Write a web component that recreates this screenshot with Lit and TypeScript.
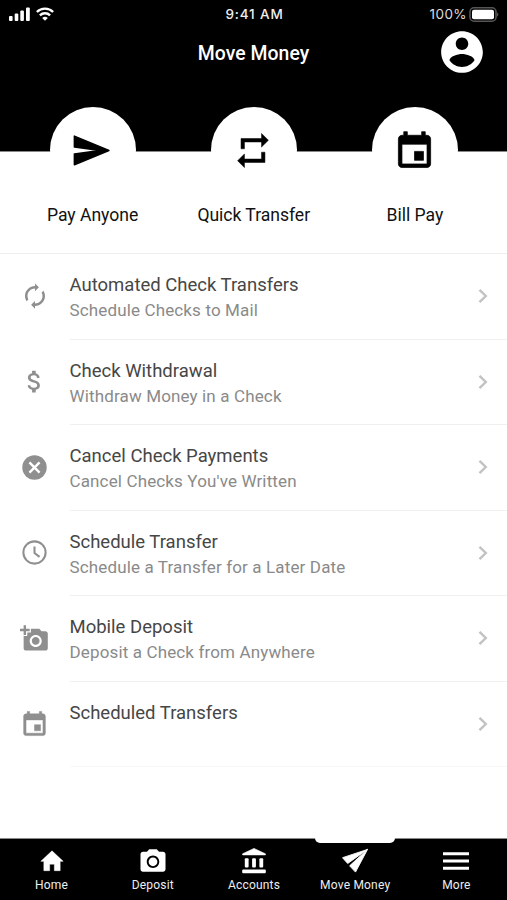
import { LitElement, html, css, svg } from "lit";
import { customElement } from "lit/decorators.js";

const EVENT = svg`<path d="M17 12h-5v5h5v-5zM16 1v2H8V1H6v2H5c-1.11 0-1.99.9-1.99 2L3 19c0 1.1.89 2 2 2h14c1.1 0 2-.9 2-2V5c0-1.1-.9-2-2-2h-1V1h-2zm3 18H5V8h14v11z" stroke-width=".4" stroke="currentColor" stroke-linejoin="round"/>`;

const icon = (shape: unknown, size: number, box = "0 0 24 24") =>
  html`<svg width=${size} height=${size} viewBox=${box} fill="currentColor">${shape}</svg>`;

const SEND = svg`<path d="M2.4 20.4L22.6 12 2.4 3.6V10l15 2-15 2z" stroke="currentColor" stroke-width=".9" stroke-linejoin="round"/>`;
const REPEAT = svg`<path d="M7 7h10v3l4-4-4-4v3H5v6h2V7zm10 10H7v-3l-4 4 4 4v-3h12v-6h-2v4z" stroke="currentColor" stroke-width=".3" stroke-linejoin="round"/>`;
const PERSON = svg`<path d="M12 2C6.48 2 2 6.48 2 12s4.48 10 10 10 10-4.48 10-10S17.52 2 12 2zm0 3c1.66 0 3 1.34 3 3s-1.34 3-3 3-3-1.34-3-3 1.34-3 3-3zm0 14.2c-2.5 0-4.71-1.28-6-3.22.03-1.99 4-3.08 6-3.08 1.99 0 5.97 1.09 6 3.08-1.29 1.94-3.5 3.22-6 3.22z"/>`;
const RENEW = svg`<path d="M12 6v2.1l3.1-3.1L12 1.9V4c-4.42 0-8 3.58-8 8 0 1.57.46 3.03 1.24 4.26L6.7 14.8c-.45-.83-.7-1.79-.7-2.8 0-3.31 2.69-6 6-6zm6.76 1.74L17.3 9.2c.44.84.7 1.79.7 2.8 0 3.31-2.69 6-6 6v-2.1L8.9 19l3.1 3.1V20c4.42 0 8-3.58 8-8 0-1.57-.46-3.03-1.24-4.26z"/>`;
const DOLLAR = svg`<path d="M11.8 10.9c-2.27-.59-3-1.2-3-2.15 0-1.09 1.01-1.85 2.7-1.85 1.78 0 2.44.85 2.5 2.1h2.21c-.07-1.72-1.12-3.3-3.21-3.81V3h-3v2.16c-1.94.42-3.5 1.68-3.5 3.61 0 2.31 1.91 3.46 4.7 4.13 2.5.6 3 1.48 3 2.41 0 .69-.49 1.79-2.7 1.79-2.06 0-2.87-.92-2.98-2.1h-2.2c.12 2.19 1.76 3.42 3.68 3.83V21h3v-2.15c1.95-.37 3.5-1.5 3.5-3.55 0-2.84-2.43-3.81-4.7-4.4z"/>`;
const CANCEL = svg`<circle cx="12" cy="12" r="10.1"/><path d="M7.8 7.8l8.4 8.4M16.2 7.8l-8.4 8.4" stroke="#fff" stroke-width="2"/>`;
const CLOCK = svg`<path d="M12 2.8a9.2 9.2 0 1 0 0 18.4 9.2 9.2 0 1 0 0-18.4zM12 7v5.4l4.2 3.2" fill="none" stroke="currentColor" stroke-width="1.7"/>`;
const ADD_PHOTO = svg`<path d="M3 4V1h2v3h3v2H5v3H3V6H0V4h3zm3 6V7h3V4h7l1.83 2H21c1.1 0 2 .9 2 2v12c0 1.1-.9 2-2 2H5c-1.1 0-2-.9-2-2V10h3zm7 9c2.76 0 5-2.24 5-5s-2.24-5-5-5-5 2.24-5 5 2.24 5 5 5zm-3.2-5c0 1.77 1.43 3.2 3.2 3.2s3.2-1.43 3.2-3.2-1.43-3.2-3.2-3.2-3.2 1.43-3.2 3.2z"/>`;
const HOME = svg`<path d="M10 20v-5.6h4V20h5v-8h2.6L12 3 2.4 12H5v8z" stroke="currentColor" stroke-width=".4" stroke-linejoin="round"/>`;
const CAMERA = svg`<circle cx="12" cy="12" r="3.5"/><path d="M9 2L7.17 4H4c-1.1 0-2 .9-2 2v12c0 1.1.9 2 2 2h16c1.1 0 2-.9 2-2V6c0-1.1-.9-2-2-2h-3.17L15 2H9zm3 15c-2.76 0-5-2.24-5-5s2.24-5 5-5 5 2.24 5 5-2.24 5-5 5z"/>`;
const BANK = svg`<path d="M12 .4L.6 5.8v1.1h22.8V5.8z" stroke="currentColor" stroke-width=".6" stroke-linejoin="round"/><rect x="2.8" y="10.2" width="3.8" height="9.2" rx="1"/><rect x="10.1" y="10.2" width="3.8" height="9.2" rx="1"/><rect x="17.4" y="10.2" width="3.8" height="9.2" rx="1"/><rect x=".2" y="21.6" width="23.6" height="3.6" rx="1"/>`;
const PLANE = svg`<path d="M25.5 .4L.5 8.7l5.2 5.8zM25.5 .4L7.6 16.8l5.9 6.3z" stroke="currentColor" stroke-width=".9" stroke-linejoin="round"/>`;
const MENU = svg`<path d="M0 1.8h26M0 9h26M0 16.2h26" stroke="currentColor" stroke-width="3" fill="none"/>`;

const ACTIONS = [
  { label: "Pay Anyone", art: icon(SEND, 41, "1 0 24 24") },
  { label: "Quick Transfer", art: icon(REPEAT, 41, "0.3 0 24 24") },
  { label: "Bill Pay", art: icon(EVENT, 43, "0 -0.5 24 24") },
];

const ROWS = [
  { title: "Automated Check Transfers", note: "Schedule Checks to Mail", art: icon(RENEW, 30) },
  { title: "Check Withdrawal", note: "Withdraw Money in a Check", art: icon(DOLLAR, 29) },
  { title: "Cancel Check Payments", note: "Cancel Checks You've Written", art: icon(CANCEL, 29) },
  { title: "Schedule Transfer", note: "Schedule a Transfer for a Later Date", art: icon(CLOCK, 29) },
  { title: "Mobile Deposit", note: "Deposit a Check from Anywhere", art: icon(ADD_PHOTO, 29) },
  { title: "Scheduled Transfers", note: "", art: icon(EVENT, 29, "0 -1 24 24") },
];

const TABS = [
  { label: "Home", art: icon(HOME, 28, "0 -0.3 24 24") },
  { label: "Deposit", art: icon(CAMERA, 30, "0 -0.6 24 24") },
  { label: "Accounts", art: icon(BANK, 26, "-1 0 26 26") },
  { label: "Move Money", art: icon(PLANE, 26, "0 -1 26 26"), active: true },
  { label: "More", art: icon(MENU, 26, "0 -4 26 26") },
];

@customElement("app-root")
export class AppRoot extends LitElement {
  static styles = css`
    :host {
      display: flex;
      flex-direction: column;
      height: 900px;
      background: #fff;
      font-family: Roboto, "Liberation Sans", sans-serif;
      overflow: hidden;
    }
    svg { display: block; flex: none; }
    .header {
      height: 151px;
      background: #000;
      border-bottom: 1px solid #888;
      color: #fff;
      flex: none;
    }
    .status, .bar {
      display: grid;
      grid-template-columns: 1fr auto 1fr;
      align-items: center;
    }
    .status {
      height: 27px;
      padding: 0 7px 0 9px;
      font: 500 13.5px/28px Inter, sans-serif;
      letter-spacing: 0.85px;
      color: #eee;
    }
    .signal { display: flex; gap: 5px; align-items: center; }
    .power {
      display: flex;
      justify-content: flex-end;
      align-items: center;
      gap: 2px;
      font-weight: 400;
      letter-spacing: 0.4px;
      color: #ddd;
    }
    .bar { height: 50px; }
    .title {
      grid-column: 2;
      font-size: 19.4px;
      font-weight: 500;
      letter-spacing: 0.05px;
      line-height: 46px;
      padding-top: 4px;
    }
    .profile { justify-self: end; margin-right: 20px; }
    .actions {
      display: grid;
      grid-template-columns: repeat(3, 1fr);
      margin-top: -45px;
      padding: 0 11.5px 0 12px;
      height: 146px;
      flex: none;
      border-bottom: 1px solid #ededed;
    }
    .action {
      display: flex;
      flex-direction: column;
      align-items: center;
      font-size: 17.6px;
      line-height: 22px;
      letter-spacing: -0.04px;
      color: #111;
    }
    .disc {
      display: grid;
      place-items: center;
      width: 86px;
      height: 86px;
      border-radius: 50%;
      background: #fff;
      color: #000;
      margin-bottom: 11px;
    }
    .row {
      display: grid;
      grid-template-columns: 69.5px 1fr;
      height: 85.5px;
      flex: none;
    }
    .row:last-of-type .body { border-color: #f8f8f8; }
    .glyph {
      display: grid;
      place-items: center;
      padding-bottom: 1px;
      color: #8f8f8f;
    }
    .body {
      display: flex;
      justify-content: space-between;
      align-items: center;
      border-bottom: 1px solid #f0f0f0;
      padding-right: 19px;
    }
    .copy { height: 50px; }
    .name {
      font-size: 18.5px;
      line-height: 26px;
      padding-top: 1px;
      margin-bottom: -1px;
      color: #464646;
    }
    .note {
      font-size: 17px;
      line-height: 26px;
      letter-spacing: 0.14px;
      color: #8a8a8a;
    }
    .tabs {
      display: grid;
      grid-template-columns: repeat(5, 1fr);
      margin-top: auto;
      padding-left: 1px;
      height: 61px;
      background: #000;
      border-top: 1px solid #888;
      color: #fff;
      flex: none;
    }
    .tab {
      position: relative;
      display: flex;
      flex-direction: column;
      align-items: center;
      font-size: 12px;
      line-height: 16px;
      letter-spacing: 0.2px;
      color: #eee;
    }
    .pic { display: grid; place-items: center; height: 38px; margin-top: 3px; margin-bottom: -3px; color: #fff; }
    .active::before {
      content: "";
      position: absolute;
      top: -1px;
      width: 80px;
      height: 5px;
      border-radius: 0 0 5px 5px;
      background: #fff;
    }
  `;

  render() {
    return html`
      <header class="header">
        <div class="status">
          <div class="signal">
            <svg width="22" height="14" viewBox="0 0 22 14" fill="#fff">
              <rect x="0" y="9" width="3.6" height="5" rx="1" /><rect x="5.7" y="6.5" width="3.6" height="7.5" rx="1" />
              <rect x="11.3" y="3.5" width="3.6" height="10.5" rx="1" /><rect x="17" y="0.5" width="3.8" height="13.5" rx="1" />
            </svg>
            <svg width="18" height="14" viewBox="0 0 18 14" fill="none" stroke="#fff" stroke-width="2.4">
              <path d="M.9 5a11.5 11.5 0 0 1 16.2 0M3.9 8.4a7.2 7.2 0 0 1 10.2 0" />
              <path d="M9 13.8L6.2 11a4 4 0 0 1 5.6 0z" fill="#fff" stroke="none" />
            </svg>
          </div>
          <div>9:41 AM</div>
          <div class="power">
            <span>100%</span>
            <svg width="31" height="15" viewBox="0 0 31 15">
              <rect x="1" y="0.8" width="26" height="13.4" rx="4" fill="none" stroke="#555" stroke-width="1.6" />
              <rect x="3" y="2.8" width="22" height="9.4" rx="2" fill="#fff" />
              <path d="M28.3 5.2q2 2.3 0 4.6z" fill="#777" />
            </svg>
          </div>
        </div>
        <div class="bar">
          <div class="title">Move Money</div>
          <div class="profile">${icon(PERSON, 50)}</div>
        </div>
      </header>
      <section class="actions">
        ${ACTIONS.map((a) => html`<div class="action"><div class="disc">${a.art}</div>${a.label}</div>`)}
      </section>
      ${ROWS.map(
        (r) => html`<div class="row">
          <div class="glyph">${r.art}</div>
          <div class="body">
            <div class="copy"><div class="name">${r.title}</div><div class="note">${r.note}</div></div>
            <svg width="10" height="16" viewBox="0 0 10 16" fill="none" stroke="#c2c2c2" stroke-width="2.4"><path d="M1.5 1.8L7.8 8l-6.3 6.2" /></svg>
          </div>
        </div>`
      )}
      <nav class="tabs">
        ${TABS.map((t) => html`<div class="tab ${t.active ? "active" : ""}"><div class="pic">${t.art}</div>${t.label}</div>`)}
      </nav>
    `;
  }
}
